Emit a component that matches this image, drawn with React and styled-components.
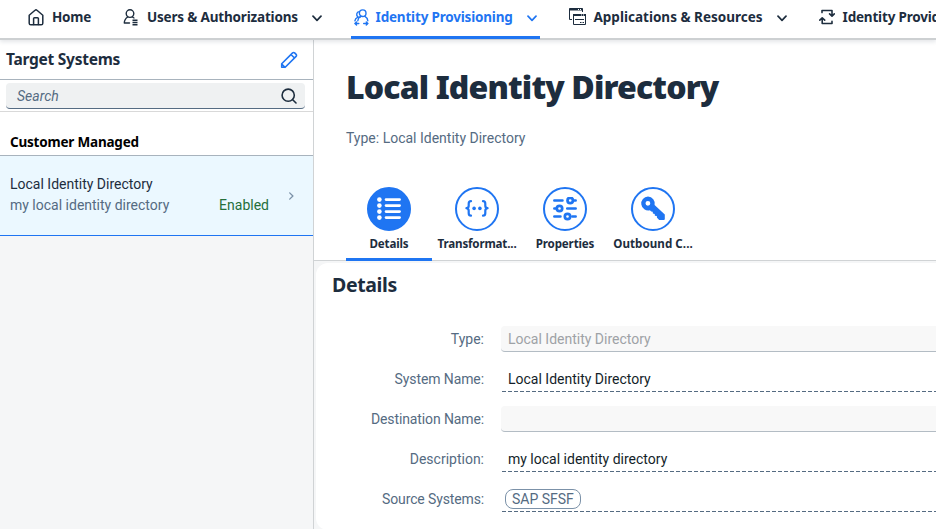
import React from 'react';
import styled, { createGlobalStyle } from 'styled-components';

const color = {
  text: '#1d2d3e',
  label: '#556b82',
  accent: '#1f75f2',
  line: '#d0d3d5',
};

const boldFont = '"Noto Sans", "Liberation Sans", sans-serif';

const GlobalStyle = createGlobalStyle`
  * { box-sizing: border-box; }
  html, body { margin: 0; padding: 0; overflow: hidden; }
  body { font-family: Roboto, "Liberation Sans", sans-serif; font-size: 14px; color: ${color.text}; background: #fff; }
  svg { display: block; }
`;

const Page = styled.div`
  width: 100%;
  height: 529px;
  display: flex;
  flex-direction: column;
  overflow: hidden;
`;

/* Top navigation */
const NavBar = styled.nav`
  position: relative;
  z-index: 1;
  flex: none;
  height: 40px;
  display: flex;
  gap: 28px;
  padding-left: 28px;
  background: #fff;
  border-bottom: 2px solid #cdd0d2;
  box-shadow: 0 2px 4px rgba(34, 53, 72, 0.12);
`;

const NavItem = styled.a`
  flex: none;
  width: ${(p) => p.$width}px;
  height: 39px;
  display: flex;
  align-items: center;
  padding-bottom: ${(p) => (p.$active ? 2 : 5)}px;
  border-bottom: ${(p) => (p.$active ? `3px solid ${color.accent}` : '0')};
  border-radius: 2px 2px 0 0;
  color: ${(p) => (p.$active ? color.accent : color.text)};
  font-family: ${boldFont};
  font-size: 13.5px;
  font-weight: 700;
  letter-spacing: ${(p) => p.$track}px;
  white-space: nowrap;
`;

const NavIcon = styled.span`
  flex: none;
  width: ${(p) => p.$slot}px;
  padding-left: ${(p) => p.$inset || 0}px;
`;

const NavChevron = styled.span`
  margin-left: auto;
  padding: 2px ${(p) => p.$inset || 0}px 0 0;
`;

/* Side list */
const Body = styled.div`
  flex: 1;
  min-height: 0;
  display: flex;
`;

const Sidebar = styled.aside`
  flex: none;
  width: 314px;
  display: flex;
  flex-direction: column;
  background: #f5f6f7;
  border-right: 1px solid ${color.line};
`;

const SidebarHeader = styled.header`
  height: 40px;
  display: flex;
  align-items: center;
  justify-content: space-between;
  padding: 0 15px 0 6px;
  background: #fff;
  border-bottom: 1px solid #a8b3bd;
`;

const SidebarTitle = styled.h2`
  margin: 0;
  padding-bottom: 2px;
  font-family: ${boldFont};
  font-size: 15.5px;
  font-weight: 700;
  letter-spacing: -0.25px;
`;

const SearchArea = styled.div`
  height: 32px;
  padding: 3px 8px 0 6px;
  background: #fff;
  border-bottom: 1px solid #d9d9d9;
`;

const SearchField = styled.div`
  height: 26px;
  display: flex;
  align-items: center;
  justify-content: space-between;
  padding: 0 8px 0 11px;
  background: #eff1f2;
  border-bottom: 1px solid ${color.label};
  border-radius: 4px;
  color: ${color.label};
  font-style: italic;
`;

const GroupHeader = styled.div`
  height: 44px;
  padding: 20px 10px 0;
  background: #fff;
  border-bottom: 1px solid #a8b3bd;
  color: #000;
  font-family: ${boldFont};
  font-size: 13.5px;
  font-weight: 700;
  line-height: 20px;
  letter-spacing: -0.2px;
`;

const SystemRow = styled.div`
  height: 80px;
  display: flex;
  align-items: center;
  padding: 0 17px 0 10px;
  background: #ebf8ff;
  border-bottom: 1px solid ${color.accent};
`;

const SystemText = styled.div`
  flex: 1;
  line-height: 21px;
  padding-bottom: 1px;
`;

const SystemLine = styled.div`
  display: flex;
  justify-content: space-between;
`;

const SystemDescription = styled.span`
  color: ${color.label};
`;

const SystemStatus = styled.span`
  color: #256f3a;
`;

const RowArrow = styled.span`
  width: 27px;
  display: flex;
  justify-content: flex-end;
`;

/* Detail area */
const Content = styled.main`
  flex: 1;
  min-width: 0;
  display: flex;
  flex-direction: column;
  background: #f5f6f7;
`;

const ObjectHeader = styled.header`
  flex: none;
  height: 221px;
  display: flex;
  flex-direction: column;
  padding-left: 32px;
  background: #fff;
  border-bottom: 1px solid ${color.line};
`;

const Title = styled.h1`
  margin: 25px 0 0;
  font-family: ${boldFont};
  font-size: 32px;
  line-height: 44px;
  font-weight: 900;
  letter-spacing: -0.87px;
  white-space: nowrap;
`;

const Subtitle = styled.div`
  margin-top: 19px;
  line-height: 20px;
  color: ${color.label};
`;

const TabStrip = styled.div`
  margin-top: auto;
  margin-bottom: -1px;
  display: flex;
`;

const Tab = styled.div`
  width: 86px;
  height: 74px;
  margin-right: 2px;
  display: flex;
  flex-direction: column;
  align-items: center;
  border-bottom: 3px solid ${(p) => (p.$active ? color.accent : 'transparent')};
  border-radius: 2px 2px 0 0;
`;

const TabCircle = styled.div`
  flex: none;
  width: 44px;
  height: 44px;
  display: flex;
  align-items: center;
  justify-content: center;
  border: 2px solid ${color.accent};
  border-radius: 50%;
  background: ${(p) => (p.$active ? color.accent : '#fff')};
  color: ${(p) => (p.$active ? '#fff' : color.accent)};
`;

const TabLabel = styled.span`
  margin-top: 5px;
  font-family: ${boldFont};
  font-size: 11.6px;
  font-weight: 700;
  line-height: 16px;
  letter-spacing: ${(p) => p.$track}px;
  white-space: nowrap;
`;

const Panel = styled.section`
  flex: none;
  height: 267px;
  margin: 2px 0 0 2px;
  background: #fff;
  border-radius: 12px 0 0 12px;
`;

const PanelTitle = styled.h3`
  margin: 0;
  padding: 8px 0 0 16px;
  font-family: ${boldFont};
  font-size: 19.5px;
  line-height: 28px;
  font-weight: 700;
  letter-spacing: -0.36px;
`;

const Form = styled.div`
  margin-top: 20px;
`;

const Field = styled.div`
  height: 40px;
  display: grid;
  grid-template-columns: 168px 1fr;
  column-gap: 17px;
  align-items: center;
`;

const FieldLabel = styled.label`
  text-align: right;
  color: ${color.label};
  letter-spacing: ${(p) => p.$track || 0}px;
`;

const FieldValue = styled.div`
  height: 26px;
  display: flex;
  align-items: center;
  white-space: nowrap;
`;

const ReadOnlyValue = styled(FieldValue)`
  padding-left: 7px;
  background: #f8f8f8;
  border-bottom: 1px solid #b3bcc4;
  border-radius: 4px 0 0 4px;
  color: #9ea2a6;
`;

const DisplayValue = styled(FieldValue)`
  margin-left: 1px;
  padding: 0 0 1px ${(p) => (p.$tokens ? 3 : 6)}px;
  color: #131e29;
  background: repeating-linear-gradient(90deg, ${color.label} 0 4px, transparent 4px 6px) 0 100% / 100% 1px no-repeat;
`;

const Token = styled.span`
  height: 20px;
  display: flex;
  align-items: center;
  padding: 0 6px;
  border: 1px solid #7b91a8;
  border-radius: 8px;
  color: ${color.label};
`;

const stroke = { fill: 'none', stroke: 'currentColor', strokeLinecap: 'round', strokeLinejoin: 'round' };

const HomeIcon = () => (
  <svg width="16" height="17" viewBox="0 0 16 17" {...stroke} strokeWidth="1.5">
    <path d="M1.2 6.2 7 1.3a1.5 1.5 0 0 1 2 0l5.8 4.9v8a1.6 1.6 0 0 1-1.6 1.6H2.8a1.6 1.6 0 0 1-1.6-1.6z" />
    <path d="M5.6 15.5V9.7a.9.9 0 0 1 .9-.9h3a.9.9 0 0 1 .9.9v5.8" />
  </svg>
);

const UserListIcon = () => (
  <svg width="16" height="17" viewBox="0 0 16 17" {...stroke} strokeWidth="1.4">
    <circle cx="7" cy="4.6" r="3.8" />
    <path d="M6.500 14H1.300C1.300 11.300 2.600 9.400 4.700 8M9.400 8l1.600 1" />
    <path d="M9.500 11.200h5M9.500 13.500h5M9.500 15.800h5" strokeLinecap="butt" />
  </svg>
);

const ProvisioningIcon = () => (
  <svg width="15" height="17" viewBox="0 0 15 17" {...stroke} strokeWidth="1.4">
    <circle cx="8.700" cy="4.200" r="3.300" />
    <path d="M5.200 2.600A2.900 2.900 0 0 0 4 7.900c.8.4 1.700.4 2.500 0M4 8.200C2.100 9 1.100 10.200.9 11.900" />
    <path d="M6.600 7.400c-1.600.8-2.600 2.200-2.800 4.300M10.900 7.300c1.700.9 2.700 2.300 2.900 4.400" />
    <path d="M.9 14.500h3.900M2.500 13 .9 14.500 2.500 16M13.900 14.500H9.700M12.300 13l1.600 1.500-1.600 1.500" />
  </svg>
);

const WindowsIcon = () => (
  <svg width="17" height="18" viewBox="0 0 17 18" {...stroke} strokeWidth="1" strokeLinejoin="miter" strokeLinecap="butt">
    <path d="M3 11.500H.5V.5h13V4" />
    <path d="M.5 1.500h13" strokeWidth="2" />
    <path d="M9 1.500h1M11 1.500h1" stroke="#fff" />
    <path d="M4.500 6.500h12v10h-12z" />
    <path d="M4 7h13" strokeWidth="2" />
    <path d="M12 7h1M14 7h1" stroke="#fff" />
    <path d="M6 11.500h9M11 14.500h1.500M13.500 14.500h1.500" />
  </svg>
);

const SyncIcon = () => (
  <svg width="16" height="16" viewBox="0 0 16 16" {...stroke} strokeWidth="1.6">
    <path d="M3 3.600V1.500h10v5.200M10.600 4.900 13 7.200l2.300-2.300" />
    <path d="M13 12.400v2.100H3.200V9.300M.8 11.100l2.400-2.300 2.500 2.300" />
  </svg>
);

const ChevronDown = () => (
  <svg width="10" height="7" viewBox="0 0 10 7" {...stroke} strokeWidth="1.7">
    <path d="M1 1.200 5 5.300l4-4.100" />
  </svg>
);

const ChevronRight = () => (
  <svg width="9" height="8" viewBox="0 0 9 8" {...stroke} stroke="#7b91a8" strokeWidth="1.3">
    <path d="M2.700.9 5.900 4 2.700 7.100" />
  </svg>
);

const PencilIcon = () => (
  <svg width="18" height="18" viewBox="0 0 18 18" {...stroke} stroke={color.accent} strokeWidth="1.6">
    <path d="M1.700 16.300v-3.600L12.600 1.900a1.400 1.400 0 0 1 2 0l1.500 1.500a1.400 1.400 0 0 1 0 2L5.200 16.300zM11 3.500 14.500 7M1.700 13l3.300 3.300" />
  </svg>
);

const SearchIcon = () => (
  <svg width="16" height="16" viewBox="0 0 16 16" {...stroke} stroke={color.text} strokeWidth="1.6">
    <circle cx="7.200" cy="7.200" r="6.100" />
    <path d="m11.700 11.700 3.300 3.300" />
  </svg>
);

const ListIcon = () => (
  <svg width="24" height="24" viewBox="0 0 24 24" {...stroke} strokeWidth="2.6">
    {[2.6, 8.6, 14.6, 20.6].map((y) => (
      <g key={y}>
        <circle cx="2.400" cy={y} r="2.300" fill="currentColor" stroke="none" />
        <path d={`M9 ${y}h13.600`} />
      </g>
    ))}
  </svg>
);

const BracesIcon = () => (
  <svg width="24" height="18" viewBox="0 0 24 18" {...stroke} strokeWidth="2.2">
    <path d="M6 1.200C4.200 1.200 3.700 2.200 3.700 3.700v2C3.700 7.200 2.800 8 1.400 8.200c1.400.2 2.300 1 2.300 2.500v2.500c0 1.500.5 2.500 2.300 2.500" />
    <path d="M18 1.200c1.800 0 2.300 1 2.300 2.500v2c0 1.500.9 2.300 2.300 2.500-1.400.2-2.300 1-2.300 2.500v2.500c0 1.500-.5 2.500-2.300 2.500" />
    <circle cx="9.100" cy="8.400" r="1.800" fill="currentColor" stroke="none" />
    <circle cx="14.900" cy="8.400" r="1.800" fill="currentColor" stroke="none" />
  </svg>
);

const SlidersIcon = () => (
  <svg width="24" height="24" viewBox="0 0 24 24" {...stroke} strokeWidth="2.5">
    <path d="M1.300 3.500h8.200M22.700 3.500h-2M1.300 11.500h2M14.200 11.500h8.500M1.300 19.500h6.200M19.300 19.500h3.400" />
    <circle cx="17.200" cy="3.500" r="2.700" strokeWidth="2.700" />
    <circle cx="6.500" cy="11.500" r="2.700" strokeWidth="2.700" />
    <circle cx="14.500" cy="19.500" r="2.700" strokeWidth="2.700" />
  </svg>
);

const KeyIcon = () => (
  <svg width="26" height="26" viewBox="0 0 26 26" fill="currentColor">
    <path
      fillRule="evenodd"
      d="M8 .5a7 7 0 1 0 1.900 13.800l1.300 1.300 1.500.2.200 1.800 1.800.300.200 1.900 1.900.300.200 1.700 2.200 2.200h4.600a1 1 0 0 0 1-1v-4.400L14.600 9A7 7 0 0 0 8 .5zM7.900 4.900a2.400 2.400 0 1 1 0 4.800 2.400 2.400 0 0 1 0-4.800z"
    />
  </svg>
);

const tabs = [
  { label: 'Details', icon: <ListIcon />, active: true, track: -0.16 },
  { label: 'Transformat...', icon: <BracesIcon />, track: -0.17 },
  { label: 'Properties', icon: <SlidersIcon />, track: -0.16 },
  { label: 'Outbound C...', icon: <KeyIcon />, track: 0.04 },
];

export default function App() {
  return (
    <Page>
      <GlobalStyle />
      <NavBar>
        <NavItem $width={67} $track={-0.25}>
          <NavIcon $slot={24}><HomeIcon /></NavIcon>
          Home
        </NavItem>
        <NavItem $width={200} $track={-0.18}>
          <NavIcon $slot={24}><UserListIcon /></NavIcon>
          Users &amp; Authorizations
          <NavChevron $inset={1}><ChevronDown /></NavChevron>
        </NavItem>
        <NavItem $width={189} $track={-0.19} $active>
          <NavIcon $slot={24.6} $inset={3}><ProvisioningIcon /></NavIcon>
          Identity Provisioning
          <NavChevron $inset={3}><ChevronDown /></NavChevron>
        </NavItem>
        <NavItem $width={220} $track={0}>
          <NavIcon $slot={25.5} $inset={1}><WindowsIcon /></NavIcon>
          Applications &amp; Resources
          <NavChevron $inset={1}><ChevronDown /></NavChevron>
        </NavItem>
        <NavItem $width={144} $track={-0.19}>
          <NavIcon $slot={26.6} $inset={3}><SyncIcon /></NavIcon>
          Identity Providers
        </NavItem>
      </NavBar>
      <Body>
        <Sidebar>
          <SidebarHeader>
            <SidebarTitle>Target Systems</SidebarTitle>
            <PencilIcon />
          </SidebarHeader>
          <SearchArea>
            <SearchField>
              Search
              <SearchIcon />
            </SearchField>
          </SearchArea>
          <GroupHeader>Customer Managed</GroupHeader>
          <SystemRow>
            <SystemText>
              <SystemLine>Local Identity Directory</SystemLine>
              <SystemLine>
                <SystemDescription>my local identity directory</SystemDescription>
                <SystemStatus>Enabled</SystemStatus>
              </SystemLine>
            </SystemText>
            <RowArrow><ChevronRight /></RowArrow>
          </SystemRow>
        </Sidebar>
        <Content>
          <ObjectHeader>
            <Title>Local Identity Directory</Title>
            <Subtitle>Type: Local Identity Directory</Subtitle>
            <TabStrip>
              {tabs.map((tab) => (
                <Tab key={tab.label} $active={tab.active}>
                  <TabCircle $active={tab.active}>{tab.icon}</TabCircle>
                  <TabLabel $track={tab.track}>{tab.label}</TabLabel>
                </Tab>
              ))}
            </TabStrip>
          </ObjectHeader>
          <Panel>
            <PanelTitle>Details</PanelTitle>
            <Form>
              <Field>
                <FieldLabel>Type:</FieldLabel>
                <ReadOnlyValue>Local Identity Directory</ReadOnlyValue>
              </Field>
              <Field>
                <FieldLabel $track={-0.1}>System Name:</FieldLabel>
                <DisplayValue>Local Identity Directory</DisplayValue>
              </Field>
              <Field>
                <FieldLabel $track={-0.12}>Destination Name:</FieldLabel>
                <ReadOnlyValue />
              </Field>
              <Field>
                <FieldLabel>Description:</FieldLabel>
                <DisplayValue>my local identity directory</DisplayValue>
              </Field>
              <Field>
                <FieldLabel $track={-0.13}>Source Systems:</FieldLabel>
                <DisplayValue $tokens>
                  <Token>SAP SFSF</Token>
                </DisplayValue>
              </Field>
            </Form>
          </Panel>
        </Content>
      </Body>
    </Page>
  );
}
